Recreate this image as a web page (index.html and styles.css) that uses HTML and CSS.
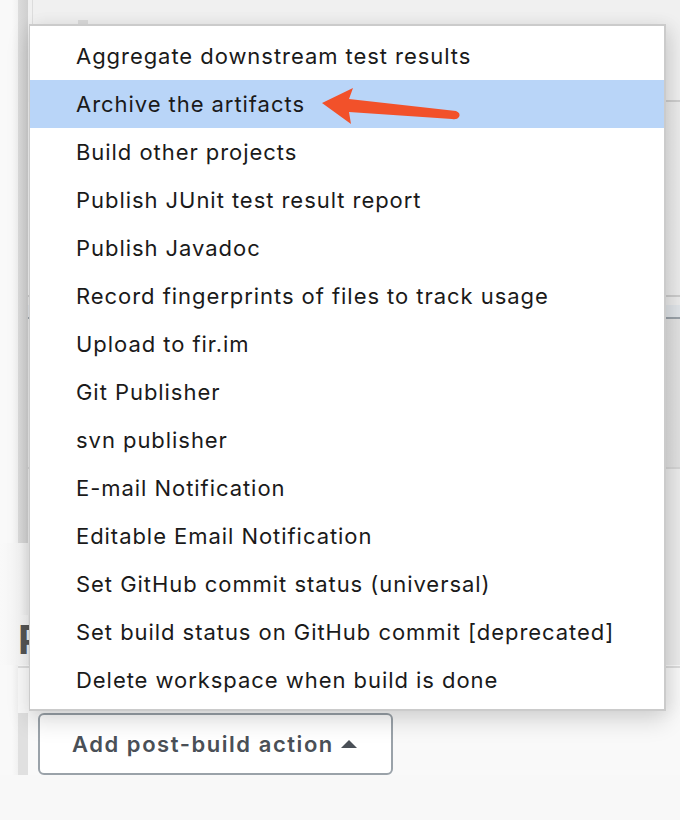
FILE: index.html
```html
<!DOCTYPE html>
<html>
<head>
<meta charset="utf-8">
<link rel="stylesheet" href="styles.css">
</head>
<body>
<div class="page">
  <div class="step">
    <div class="step-bar"></div>
    <div class="step-body">
      <div class="step-top"><span class="step-nub"></span></div>
      <div class="step-panel"></div>
      <div class="step-sub"></div>
      <div class="step-blue"></div>
      <div class="step-gray"></div>
      <div class="step-light"></div>
    </div>
  </div>
  <div class="gap"></div>
  <div class="heading"><span class="heading-text">P</span></div>
  <div class="rule"></div>
  <div class="button-row">
    <div class="row-bar"></div>
    <div class="button-wrap">
      <button class="add-btn">Add post-build action <span class="caret"></span></button>
      <div class="menu">
        <div class="item">Aggregate downstream test results</div>
        <div class="item active">Archive the artifacts
          <svg class="arrow" width="150" height="44" viewBox="0 0 150 44">
            <path d="M2 21 L33 6 L29 17 L136 29 Q141 31 139 35 Q137 38 132 37 L29 30 L31 42 Z" fill="#f2512a"/>
          </svg>
        </div>
        <div class="item">Build other projects</div>
        <div class="item">Publish JUnit test result report</div>
        <div class="item">Publish Javadoc</div>
        <div class="item">Record fingerprints of files to track usage</div>
        <div class="item">Upload to fir.im</div>
        <div class="item">Git Publisher</div>
        <div class="item">svn publisher</div>
        <div class="item">E-mail Notification</div>
        <div class="item">Editable Email Notification</div>
        <div class="item">Set GitHub commit status (universal)</div>
        <div class="item">Set build status on GitHub commit [deprecated]</div>
        <div class="item">Delete workspace when build is done</div>
      </div>
    </div>
  </div>
</div>
</body>
</html>
```

FILE: styles.css
```css
html, body {
  margin: 0;
  padding: 0;
}
body {
  background: #f8f8f8;
  font-family: Inter, "Liberation Sans", Arial, sans-serif;
  width: 680px;
  height: 820px;
  overflow: hidden;
}
.page {
  display: flex;
  flex-direction: column;
  background: linear-gradient(to right, #f9f9f9 0, #f9f9f9 12px, #f1f1f1 18px, #f9f9f9 18px);
}
.step {
  display: flex;
  height: 543px;
  padding-left: 18px;
}
.step-bar {
  width: 10px;
  background: linear-gradient(to right, #dcdcdc, #cfcfcf);
  flex: none;
}
.step-body {
  flex: 1;
  display: flex;
  flex-direction: column;
  background: #f0f0f0;
}
.step-top {
  height: 100px;
  border-left: 1px solid #dcdcdc;
  margin-left: 4px;
  border-bottom: 2px solid #cfcfcf;
  background: #f0f0f0;
  position: relative;
}
.step-nub {
  position: absolute;
  left: 45px;
  top: 20px;
  width: 10px;
  height: 6px;
  background: #dcdcdc;
}
.step-panel {
  height: 193px;
  background: linear-gradient(to right, #f4f4f4, #ececec);
  border-bottom: 2px solid #cdcdcd;
}
.step-sub {
  height: 8px;
  background: #ececec;
}
.step-blue {
  height: 12px;
  background: #e1e5e9;
  border-bottom: 2px solid #9ba3aa;
}
.step-gray {
  height: 148px;
  background: linear-gradient(to right, #ebebeb, #e2e2e2);
  border-bottom: 2px solid #d6d6d6;
}
.step-light {
  flex: 1;
  background: #ececec;
}
.gap {
  height: 72px;
  background: linear-gradient(to right, #f9f9f9 0, #f5f5f5 20px, #eaeaea 28px, #ececec 28px);
}
.heading {
  height: 50px;
  padding-left: 18px;
  background: linear-gradient(to right, #f9f9f9 0, #f3f3f3 28px, #ececec 28px);
}
.heading-text {
  display: block;
  font-size: 40px;
  font-weight: bold;
  color: #555;
  line-height: 50px;
  white-space: nowrap;
}
.rule {
  margin-left: 18px;
  height: 2px;
  background: #dddddd;
  margin-top: 1px;
}
.button-row {
  display: flex;
  margin-top: 45px;
  padding-left: 18px;
  height: 62px;
}
.row-bar {
  width: 10px;
  background: #e0e0e0;
  flex: none;
}
.button-wrap {
  position: relative;
  padding-left: 10px;
}
.add-btn {
  height: 62px;
  width: 355px;
  border: 2.5px solid #9aa2a9;
  border-radius: 6px;
  background: #fff;
  font-family: Inter, "Liberation Sans", Arial, sans-serif;
  font-weight: 600;
  font-size: 22px;
  letter-spacing: 1.55px;
  color: #4a5057;
  text-align: left;
  padding: 0 0 0 32px;
  box-sizing: border-box;
  display: flex;
  align-items: center;
}
.caret {
  display: inline-block;
  width: 0;
  height: 0;
  border-left: 8px solid transparent;
  border-right: 8px solid transparent;
  border-bottom: 8px solid #4a5057;
  margin-left: 7px;
}
.menu {
  position: absolute;
  left: 1px;
  bottom: 64px;
  width: 637px;
  box-sizing: border-box;
  background: #fff;
  border: 2px solid #cbcbcb;
  border-left-width: 1px;
  border-bottom-width: 2px;
  padding: 6px 0 5px;
  box-shadow: 0 10px 22px rgba(0,0,0,0.14), 6px 0 16px rgba(0,0,0,0.06);
}
.item {
  height: 48px;
  line-height: 48px;
  padding-left: 46px;
  font-size: 22px;
  letter-spacing: 0.95px;
  color: #1a1a1a;
  white-space: nowrap;
  position: relative;
}
.item.active {
  background: #b9d5f8;
}
.arrow {
  position: absolute;
  left: 290px;
  top: 2px;
}
```
